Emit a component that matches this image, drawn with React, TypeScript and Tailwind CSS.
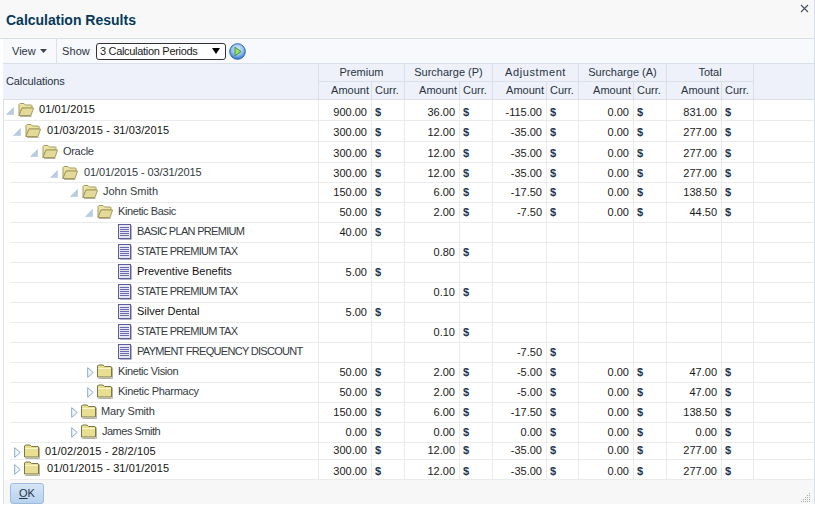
import React from "react";

type V = [string, boolean, string, boolean, string, boolean, string, boolean, string, boolean];
type Row = {
  label: string;
  h: string;
  pl: string;
  gap: string;
  kind: "open" | "closed" | "doc";
  tree: string;
  num: string;
  track?: string;
  first?: boolean;
  dark?: boolean;
  v: V;
};

const cols = [
  "w-[53px]",
  "w-[33px]",
  "w-[55px]",
  "w-[33px]",
  "w-[54px]",
  "w-[32px]",
  "w-[55px]",
  "w-[33px]",
  "w-[55px]",
  "w-[32px]",
];

const n = (a = "", b = "", c = "", d = "", e = ""): V => [a, !!a, b, !!b, c, !!c, d, !!d, e, !!e];
const caps = "tracking-[-0.7px]";
const up = "pb-[1px]";

const rows: Row[] = [
  { label: "01/01/2015", h: "h-[21px]", pl: "pl-[2px]", gap: "ml-[5px]", kind: "open", tree: "pb-[2px]", num: "pt-[3px]", first: true, dark: true, track: "tracking-[0.1px]", v: n("900.00", "36.00", "-115.00", "0.00", "831.00") },
  { label: "01/03/2015 - 31/03/2015", h: "h-[21px]", pl: "pl-[9px]", gap: "ml-[6px]", kind: "open", tree: "pb-[2px]", num: "pt-[2px]", dark: true, track: "tracking-[0.1px]", v: n("300.00", "12.00", "-35.00", "0.00", "277.00") },
  { label: "Oracle", h: "h-[21px]", pl: "pl-[26px]", gap: "ml-[5px]", kind: "open", tree: "pb-[2px]", num: "pt-[2px]", track: "tracking-[-0.3px]", v: n("300.00", "12.00", "-35.00", "0.00", "277.00") },
  { label: "01/01/2015 - 03/31/2015", h: "h-[20px]", pl: "pl-[46px]", gap: "ml-[6px]", kind: "open", tree: "pb-[2px]", num: "pt-[1px]", track: "tracking-[-0.1px]", v: n("300.00", "12.00", "-35.00", "0.00", "277.00") },
  { label: "John Smith", h: "h-[20px]", pl: "pl-[66px]", gap: "ml-[5px]", kind: "open", tree: "pb-[3px]", num: up, v: n("150.00", "6.00", "-17.50", "0.00", "138.50") },
  { label: "Kinetic Basic", h: "h-[20px]", pl: "pl-[81px]", gap: "ml-[5px]", kind: "open", tree: "pb-[3px]", num: up, track: "tracking-[-0.4px]", v: n("50.00", "2.00", "-7.50", "0.00", "44.50") },
  { label: "BASIC PLAN PREMIUM", h: "h-[20px]", pl: "pl-[114px]", gap: "ml-[5px]", kind: "doc", tree: "pb-[3px]", num: up, track: caps, v: n("40.00") },
  { label: "STATE PREMIUM TAX", h: "h-[20px]", pl: "pl-[114px]", gap: "ml-[5px]", kind: "doc", tree: "pb-[3px]", num: up, track: caps, v: n("", "0.80") },
  { label: "Preventive Benefits", h: "h-[20px]", pl: "pl-[114px]", gap: "ml-[5px]", kind: "doc", tree: "pb-[3px]", num: up, dark: true, v: n("5.00") },
  { label: "STATE PREMIUM TAX", h: "h-[20px]", pl: "pl-[114px]", gap: "ml-[5px]", kind: "doc", tree: "pb-[3px]", num: up, track: caps, v: n("", "0.10") },
  { label: "Silver Dental", h: "h-[20px]", pl: "pl-[114px]", gap: "ml-[5px]", kind: "doc", tree: "pb-[3px]", num: up, dark: true, v: n("5.00") },
  { label: "STATE PREMIUM TAX", h: "h-[20px]", pl: "pl-[114px]", gap: "ml-[5px]", kind: "doc", tree: "pb-[3px]", num: up, track: caps, v: n("", "0.10") },
  { label: "PAYMENT FREQUENCY DISCOUNT", h: "h-[20px]", pl: "pl-[114px]", gap: "ml-[5px]", kind: "doc", tree: "pb-[3px]", num: up, track: caps, v: n("", "", "-7.50") },
  { label: "Kinetic Vision", h: "h-[20px]", pl: "pl-[83px]", gap: "ml-[5px]", kind: "closed", tree: "pb-[3px]", num: up, track: "tracking-[-0.4px]", v: n("50.00", "2.00", "-5.00", "0.00", "47.00") },
  { label: "Kinetic Pharmacy", h: "h-[20px]", pl: "pl-[83px]", gap: "ml-[5px]", kind: "closed", tree: "pb-[3px]", num: up, track: "tracking-[-0.3px]", v: n("50.00", "2.00", "-5.00", "0.00", "47.00") },
  { label: "Mary Smith", h: "h-[20px]", pl: "pl-[67px]", gap: "ml-[4px]", kind: "closed", tree: "pb-[3px]", num: up, track: "tracking-[-0.2px]", v: n("150.00", "6.00", "-17.50", "0.00", "138.50") },
  { label: "James Smith", h: "h-[20px]", pl: "pl-[67px]", gap: "ml-[5px]", kind: "closed", tree: "pb-[3px]", num: up, track: "tracking-[-0.5px]", v: n("0.00", "0.00", "0.00", "0.00", "0.00") },
  { label: "01/02/2015 - 28/2/105", h: "h-[17px]", pl: "pl-[10px]", gap: "ml-[5px]", kind: "closed", tree: "pb-[0px]", num: "pb-[2px]", dark: true, track: "tracking-[0.15px]", v: n("300.00", "12.00", "-35.00", "0.00", "277.00") },
  { label: "01/01/2015 - 31/01/2015", h: "h-[20px]", pl: "pl-[10px]", gap: "ml-[7px]", kind: "closed", tree: "pb-[3px]", num: "pt-[2px]", dark: true, track: "tracking-[0.1px]", v: n("300.00", "12.00", "-35.00", "0.00", "277.00") },
];

function Tri({ open }: { open: boolean }) {
  return open ? (
    <svg width="8" height="8" viewBox="0 0 8 8" className="shrink-0 mt-[3px]">
      <path d="M7.5 .5V7.5H.5Z" fill="#b9cde2" stroke="#c3d3e5" strokeWidth="1" />
    </svg>
  ) : (
    <svg width="7" height="11" viewBox="0 0 7 11" className="shrink-0 mt-[2px]">
      <path d="M.7 .7L6.2 5.5L.7 10.3Z" fill="#f4f8fd" stroke="#8ba9cb" strokeWidth="1" />
    </svg>
  );
}

function FolderOpen() {
  return (
    <svg width="16" height="15" viewBox="0 0 16 15" className="shrink-0">
      <path d="M1 13.5V2.5L2 1.5H6L7.5 3H13.5L14 3.5V6H4L1 13.5Z" fill="#ece2a2" stroke="#a39a62" />
      <path d="M1 13.5L4 6H15.5L13 13.5Z" fill="#e4da98" stroke="#a39a62" />
      <path d="M2 14.5H13.5" stroke="#b8b49c" />
    </svg>
  );
}

function FolderClosed() {
  return (
    <svg width="16" height="15" viewBox="0 0 16 15" className="shrink-0">
      <path d="M.5 13V2L1.5 1H6L7.5 2.5H14L14.5 3V13Z" fill="#e9df92" stroke="#7c7648" />
      <path d="M1 4.5H14" stroke="#fbf6c8" />
      <path d="M1.5 14.5H15.5V3.5" stroke="#b4b4a8" fill="none" />
    </svg>
  );
}

function Doc() {
  return (
    <svg width="14" height="16" viewBox="0 0 14 16" className="shrink-0">
      <rect x=".5" y=".5" width="12" height="14" fill="#e6e6f4" stroke="#5c5c9e" />
      <path d="M2 3.5H11M2 5.5H11M2 7.5H11M2 9.5H11M2 11.5H11" stroke="#6a6aa8" />
      <path d="M1.5 15.5H13.5V1.5" stroke="#b4b4c8" fill="none" />
    </svg>
  );
}

function TreeCell({ r }: { r: Row }) {
  return (
    <div className={`w-[315px] shrink-0 flex items-center border-r border-[#ebebeb] ${r.pl} ${r.tree}`}>
      {r.kind !== "doc" && <Tri open={r.kind === "open"} />}
      {r.kind === "open" && <span className="w-[4px] shrink-0" />}
      {r.kind === "closed" && <span className="w-[3px] shrink-0" />}
      {r.kind === "open" && <FolderOpen />}
      {r.kind === "closed" && <FolderClosed />}
      {r.kind === "doc" && <Doc />}
      <span className={`${r.gap} whitespace-nowrap ${r.track ?? ""} ${r.dark ? "text-[#111111]" : "text-[#333a40]"}`}>{r.label}</span>
    </div>
  );
}

export default function App() {
  return (
    <div className="w-[815px] h-[519px] bg-white overflow-hidden text-[11px] leading-[13px] text-[#1a1a1a] font-['Liberation_Sans',Arial,sans-serif]">
      <div className="h-[504px] flex flex-col border-r border-[#d9e0ea]">
        {/* Title */}
        <div className="h-[39px] shrink-0 bg-[#f8f8f8] flex justify-between border-b border-[#d9e0ea]">
          <h1 className="pl-[6px] pt-[12px] text-[14px] leading-[17px] font-bold text-[#063a58]">Calculation Results</h1>
          <svg width="9" height="9" viewBox="0 0 9 9" className="mt-[4px] mr-[5px]">
            <path d="M1 1L8 8M8 1L1 8" stroke="#4a5560" strokeWidth="1.2" />
          </svg>
        </div>
        {/* Toolbar */}
        <div className="h-[25px] shrink-0 ml-[3px] bg-[#f8f9fd] border-b border-[#d9e0ea] flex items-center">
          <div className="w-[54px] h-full border-r border-[#d9e0ea] flex items-center pl-[9px] text-[#27333f]">
            <span>View</span>
            <svg width="7" height="4" viewBox="0 0 7 4" className="ml-[4px]">
              <path d="M0 0H7L3.5 4Z" fill="#3a4450" />
            </svg>
          </div>
          <span className="ml-[5px] text-[#27333f] tracking-[0.1px]">Show</span>
          <div className="ml-[6px] w-[130px] h-[17px] border border-[#333333] rounded-[3px] bg-white flex items-center justify-between pl-[3px] pr-[5px]">
            <span className="text-[#1a1a1a] tracking-[-0.3px]">3 Calculation Periods</span>
            <svg width="8" height="6" viewBox="0 0 8 6">
              <path d="M0 0H8L4 6Z" fill="#000000" />
            </svg>
          </div>
          <svg width="17" height="17" viewBox="0 0 17 17" className="ml-[3px]">
            <defs>
              <radialGradient id="blueBall" cx="50%" cy="35%" r="65%">
                <stop offset="0%" stopColor="#dcecfb" />
                <stop offset="60%" stopColor="#8fbdec" />
                <stop offset="100%" stopColor="#2a6fc4" />
              </radialGradient>
            </defs>
            <circle cx="8.5" cy="8.5" r="7.8" fill="url(#blueBall)" stroke="#2b66b4" strokeWidth="1" />
            <path d="M6 4.2L12 8.5L6 12.8Z" fill="#9fdc6a" stroke="#3f9a36" strokeWidth="1" />
          </svg>
        </div>
        {/* Column header */}
        <div className="h-[36px] shrink-0 ml-[3px] flex bg-[#eef1fa] border-b border-[#d9e0ea] text-[#27333f]">
          <div className="w-[316px] shrink-0 border-r border-[#d9e0ea] flex items-center pl-[3px] tracking-[-0.1px]">Calculations</div>
          {[
            ["Premium", "w-[86px]", "w-[53px]", "w-[33px]", ""],
            ["Surcharge (P)", "w-[88px]", "w-[55px]", "w-[33px]", ""],
            ["Adjustment", "w-[86px]", "w-[54px]", "w-[32px]", "tracking-[0.6px]"],
            ["Surcharge (A)", "w-[88px]", "w-[55px]", "w-[33px]", ""],
            ["Total", "w-[87px]", "w-[55px]", "w-[32px]", ""],
          ].map(([t, w, a, c, tr]) => (
            <div key={t} className={`${w} shrink-0 flex flex-col`}>
              <div className={`h-[18px] shrink-0 border-r border-b border-[#d9e0ea] flex items-center justify-center ${tr}`}>{t}</div>
              <div className="flex-1 flex">
                <div className={`${a} shrink-0 border-r border-[#d9e0ea] flex items-center justify-end pr-[2px]`}>Amount</div>
                <div className={`${c} shrink-0 border-r border-[#d9e0ea] flex items-center pl-[3px]`}>Curr.</div>
              </div>
            </div>
          ))}
        </div>
        {/* Rows */}
        <div className="ml-[3px] flex-1 flex flex-col border-l border-[#d9e0ea] bg-white">
          {rows.map((r, i) => (
            <div key={i} className={`${r.h} shrink-0 flex relative`}>
              <div className={`absolute bottom-0 right-0 h-px bg-[#ebebeb] ${r.first ? "left-0" : "left-[6px]"}`} />
              <TreeCell r={r} />
              {r.v.map((val, j) =>
                j % 2 === 0 ? (
                  <div key={j} className={`${cols[j]} shrink-0 border-r border-[#ebebeb] flex items-center justify-end pr-[4px] ${r.num}`}>
                    {val as string}
                  </div>
                ) : (
                  <div key={j} className={`${cols[j]} shrink-0 border-r border-[#ebebeb] flex items-center pl-[3px] text-[#1d3550] font-bold ${r.num}`}>
                    {val ? "$" : ""}
                  </div>
                )
              )}
              <div className="flex-1" />
            </div>
          ))}
          {/* Footer */}
          <div className="flex-1 bg-[#f7f7f7] flex justify-between items-end pl-[6px]">
            <button className="w-[34px] h-[21px] border border-[#9dbbdb] rounded-[3px] bg-gradient-to-b from-[#d5e5f6] to-[#b7d2ef] text-[#27333f]">
              <span className="underline">O</span>K
            </button>
            <svg width="10" height="10" viewBox="0 0 10 10" className="mb-[2px] mr-[3px]">
              <path d="M8 1h1v1H8zM6 3h1v1H6zM8 3h1v1H8zM4 5h1v1H4zM6 5h1v1H6zM8 5h1v1H8zM2 7h1v1H2zM4 7h1v1H4zM6 7h1v1H6zM8 7h1v1H8zM0 9h1v1H0zM2 9h1v1H2zM4 9h1v1H4zM6 9h1v1H6zM8 9h1v1H8z" fill="#a8adb3" />
            </svg>
          </div>
        </div>
      </div>
    </div>
  );
}
